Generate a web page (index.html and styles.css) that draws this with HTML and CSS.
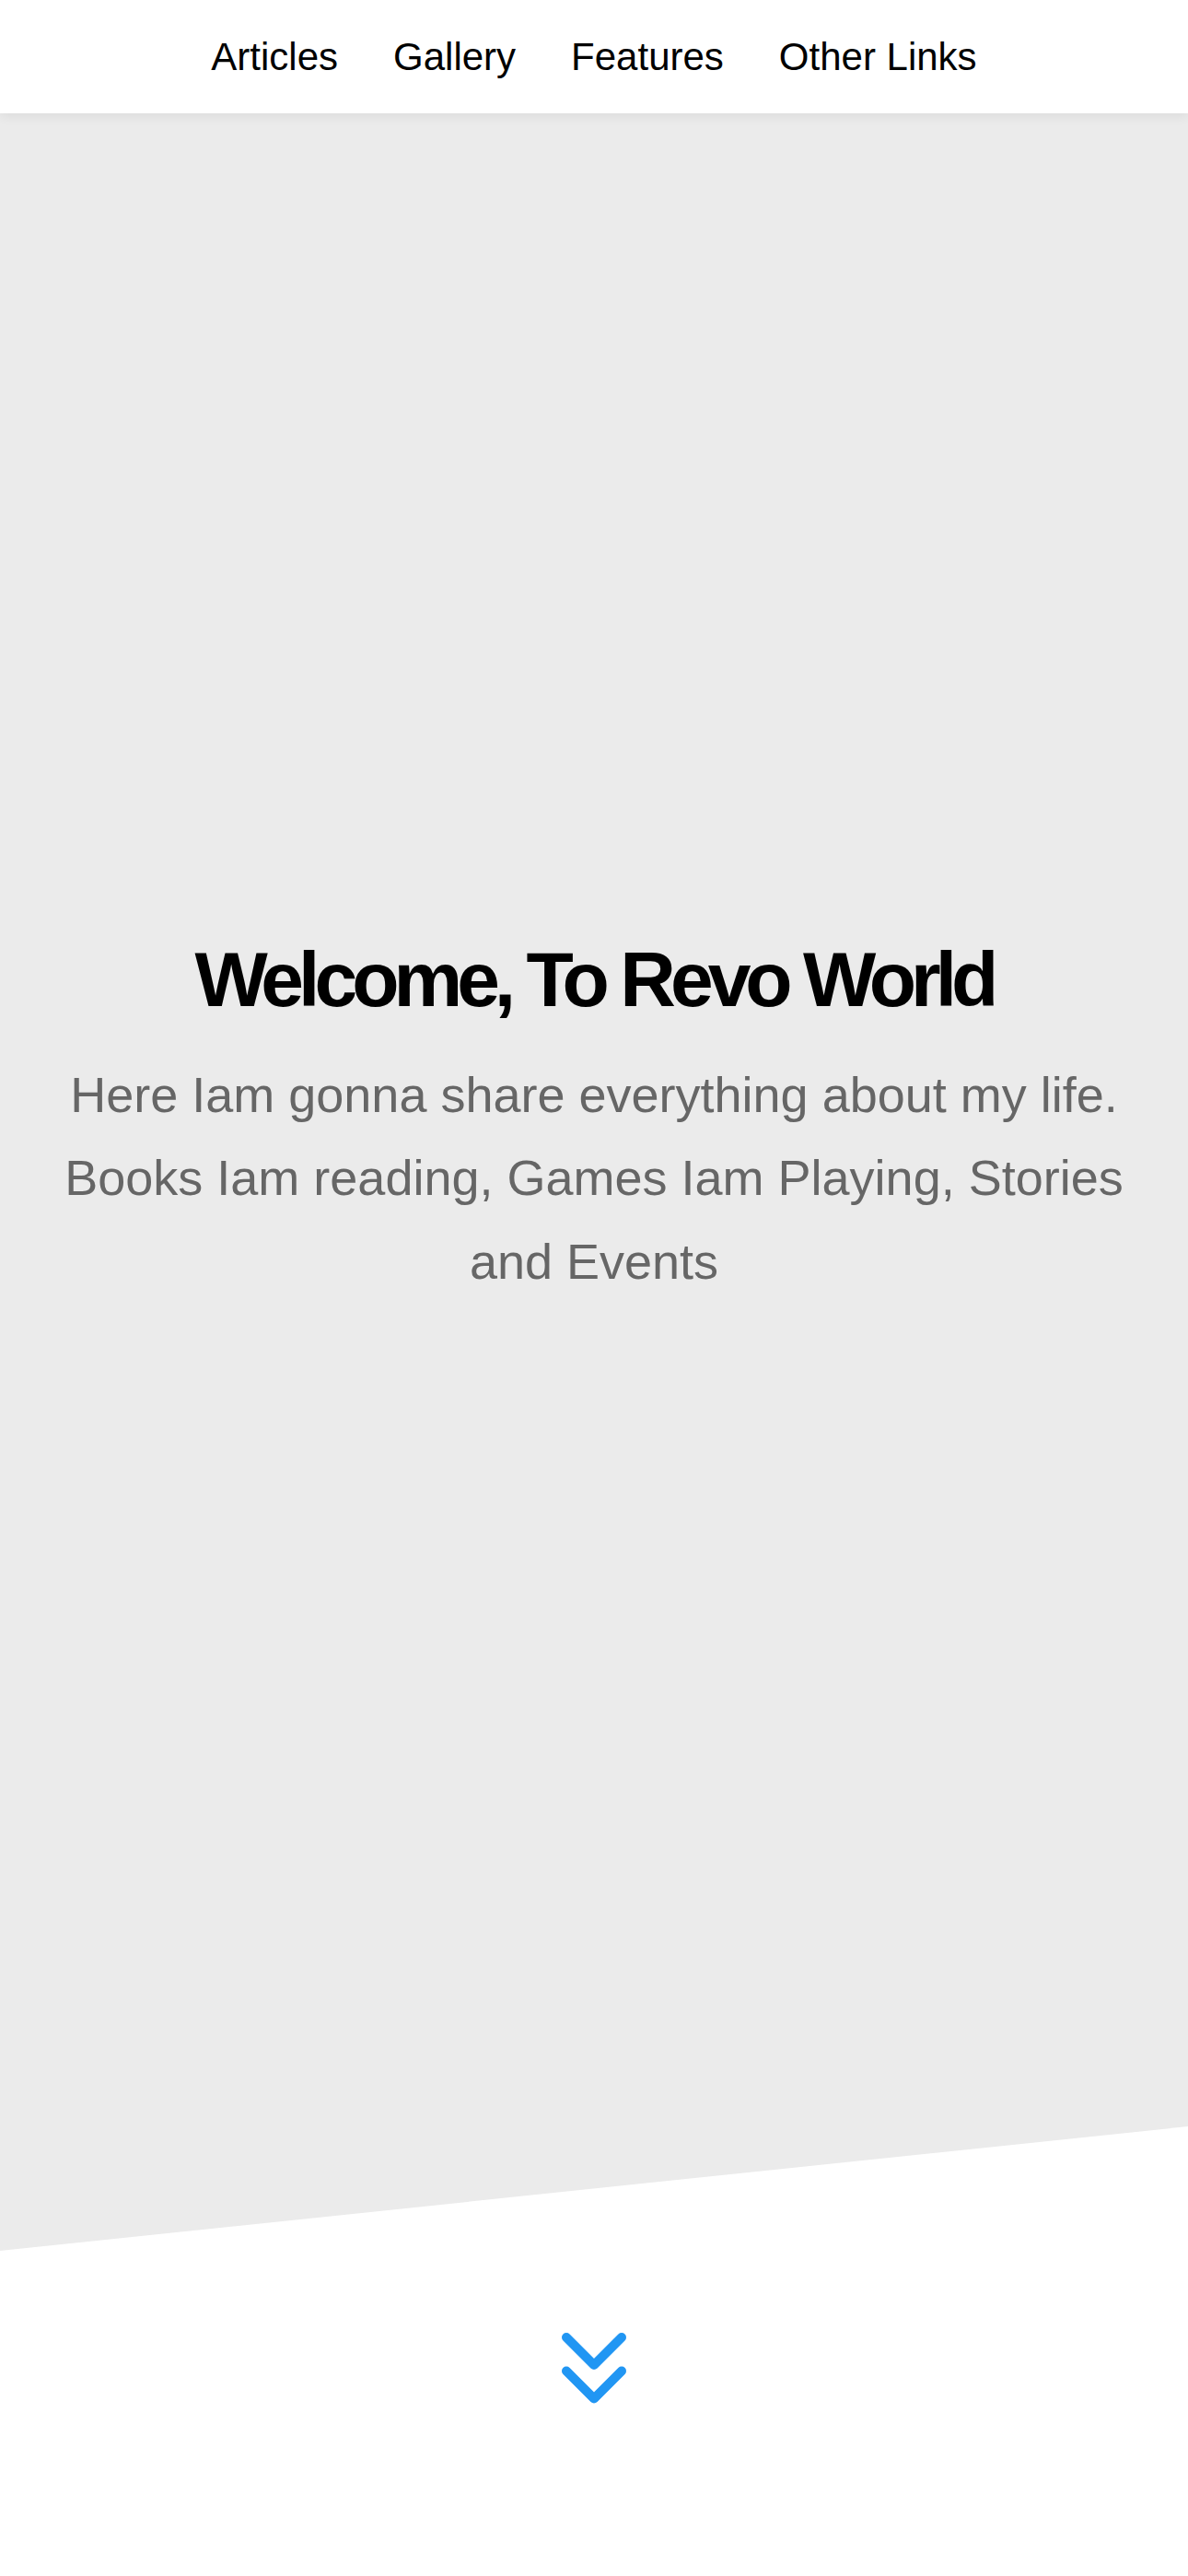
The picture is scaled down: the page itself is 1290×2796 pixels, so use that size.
FILE: index.html
```html
<!DOCTYPE html>
<html lang="en">
<head>
<meta charset="utf-8">
<title>Revo World</title>
<link rel="stylesheet" href="styles.css">
</head>
<body>
<nav class="nav">
  <a class="nav-link" href="#">Articles</a>
  <a class="nav-link" href="#">Gallery</a>
  <a class="nav-link" href="#">Features</a>
  <a class="nav-link" href="#">Other Links</a>
</nav>
<header class="hero">
  <h1 class="hero-title">Welcome, To Revo World</h1>
  <p class="hero-text">Here Iam gonna share everything about my life. Books Iam reading, Games Iam Playing, Stories and Events</p>
</header>
<section class="scroll">
  <svg class="scroll-icon" width="72" height="84" viewBox="0 0 72 84" aria-hidden="true">
    <polyline points="6,8 36,38 66,8" fill="none" stroke="#2196f3" stroke-width="10" stroke-linecap="round" stroke-linejoin="round"/>
    <polyline points="6,44.5 36,74.5 66,44.5" fill="none" stroke="#2196f3" stroke-width="10" stroke-linecap="round" stroke-linejoin="round"/>
  </svg>
</section>
</body>
</html>
```
FILE: styles.css
```css
html, body {
  margin: 0;
  padding: 0;
}
body {
  background: #ffffff;
  font-family: "Liberation Sans", Arial, sans-serif;
  width: 1290px;
  min-height: 2796px;
  overflow: hidden;
}
.nav {
  position: relative;
  z-index: 2;
  height: 123px;
  background: #ffffff;
  display: flex;
  justify-content: center;
  align-items: center;
  gap: 60px;
  box-shadow: 0 3px 12px rgba(0, 0, 0, 0.07);
}
.nav-link {
  color: #000000;
  text-decoration: none;
  font-size: 42px;
}
.hero {
  height: 2320px;
  background: #ebebeb;
  clip-path: polygon(0 0, 100% 0, 100% calc(100% - 135px), 0 100%);
  display: flex;
  flex-direction: column;
  justify-content: center;
  align-items: center;
  padding: 0 50px 139px;
  box-sizing: border-box;
  text-align: center;
}
.hero-title {
  margin: 0;
  font-size: 84px;
  line-height: 100.8px;
  font-weight: 700;
  letter-spacing: -6px;
  color: #000000;
}
.hero-text {
  margin: 29px 0 0;
  font-size: 54px;
  line-height: 90.5px;
  color: #666666;
}
.scroll {
  display: flex;
  justify-content: center;
  padding-top: 86px;
  height: 266px;
}
.scroll-icon {
  display: block;
}
```
